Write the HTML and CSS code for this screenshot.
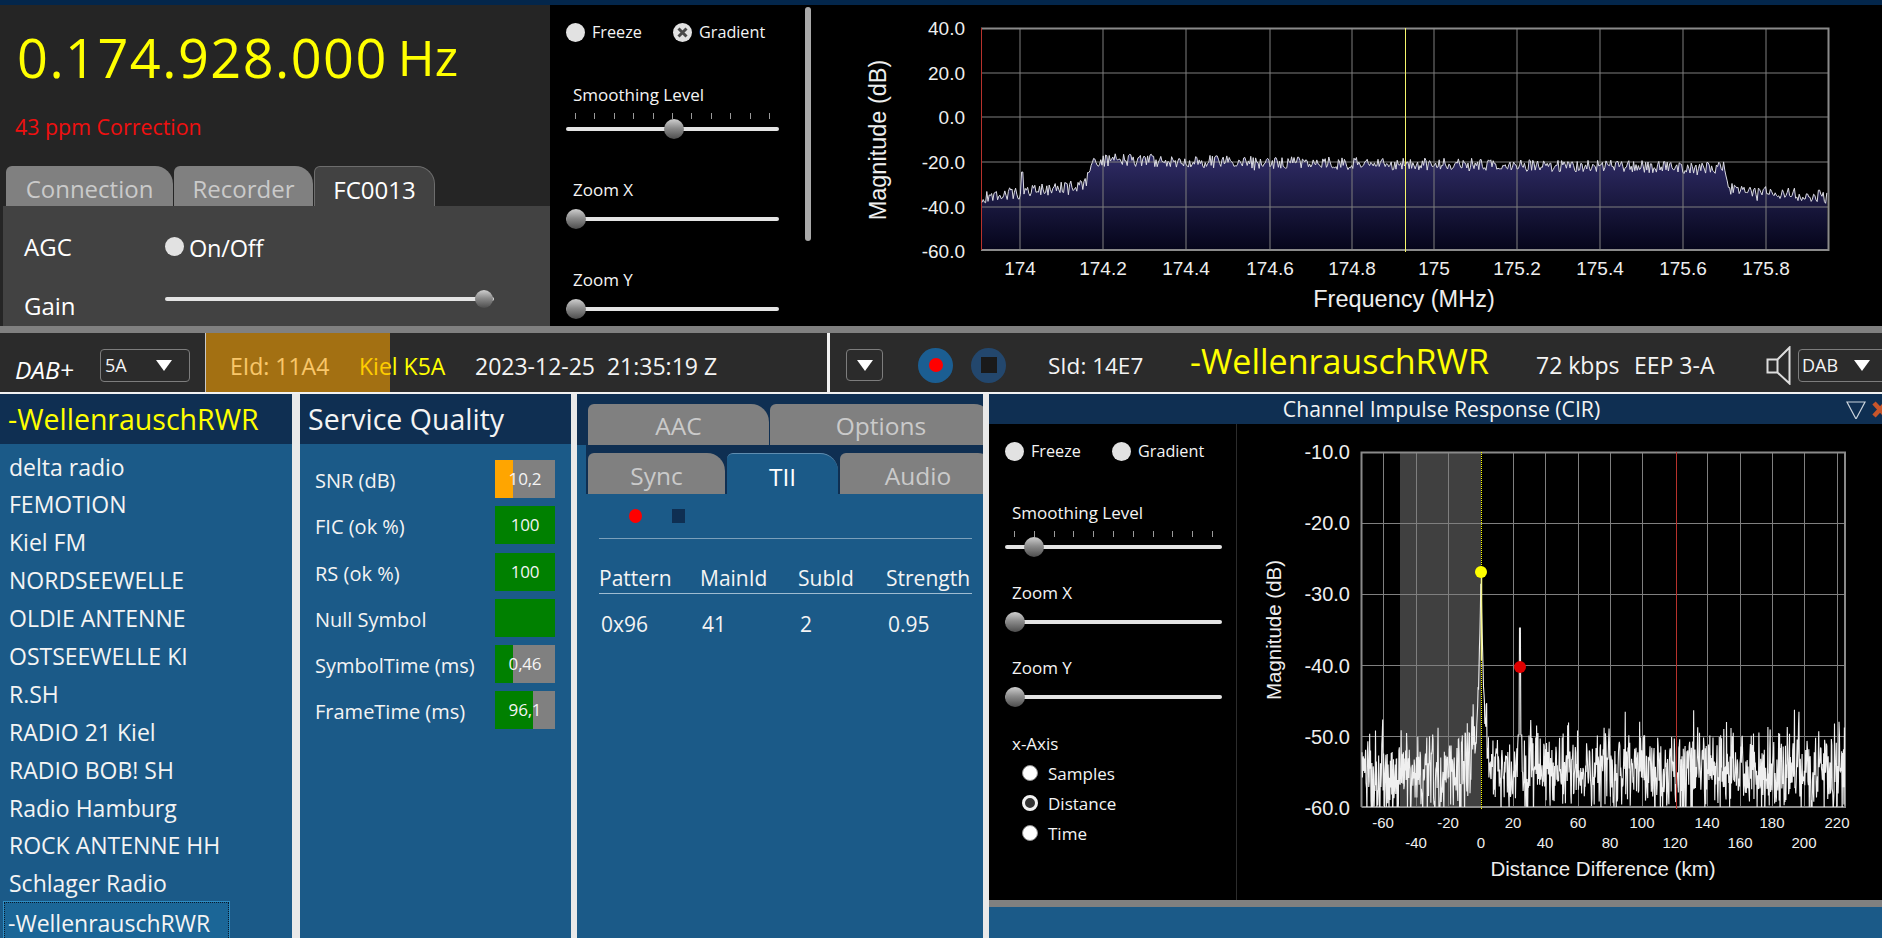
FILE: index.html
```html
<!DOCTYPE html>
<html lang="en">
<head>
    <meta charset="UTF-8">
    <title>welle.io</title>
    <link rel="stylesheet" href="styles.css">
</head>
<body>
<div class="app">
    <div class="top-strip"></div>

    <div class="top-row">
        <section class="freq-panel">
            <div class="freq-readout"><span class="freq-value">0.174.928.000</span><span class="freq-unit">Hz</span></div>
            <div class="ppm">43 ppm Correction</div>
            <div class="tab-bar">
                <div class="tab tab-connection">Connection</div>
                <div class="tab tab-recorder">Recorder</div>
                <div class="tab tab-device active">FC0013</div>
            </div>
            <div class="device-page">
                <div class="device-label">AGC</div>
                <div class="agc-toggle"><span class="radio agc-radio"></span><span>On/Off</span></div>
                <div class="device-label">Gain</div>
                <div class="slider gain-slider"><span class="track"></span><span class="thumb gain-thumb" style="left:94.2%"></span></div>
            </div>
        </section>

        <section class="controls spec-controls">
            <div class="controls-scroll">
                <div class="toggle-row">
                    <div class="toggle"><span class="radio"></span><span>Freeze</span></div>
                    <div class="toggle">
                        <span class="radio"><svg viewBox="0 0 19 19"><path d="M5.5 5.5l8 8M13.5 5.5l-8 8" stroke="#4a4a4a" stroke-width="3" fill="none"/></svg></span>
                        <span>Gradient</span>
                    </div>
                </div>
                <div class="control-group first">
                    <div class="control-label">Smoothing Level</div>
                    <div class="ticks"><i></i><i></i><i></i><i></i><i></i><i></i><i></i><i></i><i></i><i></i><i></i></div>
                    <div class="slider"><span class="track"></span><span class="thumb" style="left:46%"></span></div>
                </div>
                <div class="control-group">
                    <div class="control-label">Zoom X</div>
                    <div class="slider"><span class="track"></span><span class="thumb" style="left:0"></span></div>
                </div>
                <div class="control-group">
                    <div class="control-label">Zoom Y</div>
                    <div class="slider"><span class="track"></span><span class="thumb" style="left:0"></span></div>
                </div>
            </div>
            <div class="scrollbar"></div>
        </section>

        <svg class="spectrum" viewBox="830 5 1052 321" width="1052" height="321">
            <defs>
                <linearGradient id="specFill" gradientUnits="userSpaceOnUse" x1="0" y1="160" x2="0" y2="250">
                    <stop offset="0" stop-color="#2d2a62"/>
                    <stop offset="1" stop-color="#05051a"/>
                </linearGradient>
            </defs>
            <path id="specArea" fill="url(#specFill)"/>
            <path class="grid" d="M981 73H1829M981 117H1829M981 162H1829M981 207H1829M1020 28V250M1103 28V250M1186 28V250M1270 28V250M1352 28V250M1434 28V250M1517 28V250M1600 28V250M1683 28V250M1766 28V250"/>
            <path class="frame" d="M981 28.5H1828.5V250H981"/>
            <path class="marker-red" d="M981.5 28V250"/>
            <path id="specTrace" class="trace-thin"/>
            <path class="marker-yellow" d="M1405.5 28V252"/>
            <g class="tick y-tick">
                <text x="965" y="35">40.0</text>
                <text x="965" y="80">20.0</text>
                <text x="965" y="124">0.0</text>
                <text x="965" y="169">-20.0</text>
                <text x="965" y="214">-40.0</text>
                <text x="965" y="258">-60.0</text>
            </g>
            <g class="tick x-tick">
                <text x="1020" y="275">174</text>
                <text x="1103" y="275">174.2</text>
                <text x="1186" y="275">174.4</text>
                <text x="1270" y="275">174.6</text>
                <text x="1352" y="275">174.8</text>
                <text x="1434" y="275">175</text>
                <text x="1517" y="275">175.2</text>
                <text x="1600" y="275">175.4</text>
                <text x="1683" y="275">175.6</text>
                <text x="1766" y="275">175.8</text>
            </g>
            <text class="axis-title spec-axis" x="1404" y="307">Frequency (MHz)</text>
            <text class="axis-title spec-axis" transform="rotate(-90 886 140)" x="886" y="140">Magnitude (dB)</text>
        </svg>
    </div>

    <div class="separator"></div>

    <header class="info-bar">
        <div class="mode">DAB+</div>
        <div class="combo channel-combo"><span>5A</span><i class="arrow"></i></div>
        <div class="ensemble">
            <span class="ensemble-id">EId: 11A4</span>
            <span class="ensemble-name">Kiel K5A</span>
            <span class="ensemble-time">2023-12-25&nbsp;&nbsp;21:35:19 Z</span>
            <div class="ensemble-fill" style="width:184px"></div>
        </div>
        <div class="service">
            <div class="combo small-combo"><i class="arrow"></i></div>
            <div class="round-btn record"><i></i></div>
            <div class="round-btn stop"><i></i></div>
            <span class="service-id">SId: 14E7</span>
            <span class="service-name">-WellenrauschRWR</span>
            <span class="service-rate">72 kbps</span>
            <span class="service-eep">EEP 3-A</span>
            <svg class="speaker" viewBox="0 0 25 39" width="25" height="39">
                <path d="M1.5 13.5H11.5V26.5H1.5ZM11.5 13.5L23.5 1.5V37.5L11.5 26.5" fill="none" stroke="#ddd" stroke-width="2"/>
            </svg>
            <div class="combo audio-combo"><span>DAB</span><i class="arrow"></i></div>
        </div>
    </header>

    <main class="main">
        <section class="stations">
            <h2 class="pane-head current">-WellenrauschRWR</h2>
            <ul class="station-list">
                <li>delta radio</li>
                <li>FEMOTION</li>
                <li>Kiel FM</li>
                <li>NORDSEEWELLE</li>
                <li>OLDIE ANTENNE</li>
                <li>OSTSEEWELLE KI</li>
                <li>R.SH</li>
                <li>RADIO 21 Kiel</li>
                <li>RADIO BOB! SH</li>
                <li>Radio Hamburg</li>
                <li>ROCK ANTENNE HH</li>
                <li>Schlager Radio</li>
                <li class="selected">-WellenrauschRWR</li>
            </ul>
        </section>

        <section class="quality">
            <h2 class="pane-head">Service Quality</h2>
            <div class="quality-rows">
                <div class="quality-row"><span class="quality-label">SNR (dB)</span><div class="meter"><i class="warn" style="width:18px"></i><b>10,2</b></div></div>
                <div class="quality-row"><span class="quality-label">FIC (ok %)</span><div class="meter"><i style="width:100%"></i><b>100</b></div></div>
                <div class="quality-row"><span class="quality-label">RS (ok %)</span><div class="meter"><i style="width:100%"></i><b>100</b></div></div>
                <div class="quality-row"><span class="quality-label">Null Symbol</span><div class="meter"><i style="width:100%"></i></div></div>
                <div class="quality-row"><span class="quality-label">SymbolTime (ms)</span><div class="meter"><i style="width:18px"></i><b>0,46</b></div></div>
                <div class="quality-row"><span class="quality-label">FrameTime (ms)</span><div class="meter"><i style="width:38px"></i><b>96,1</b></div></div>
            </div>
        </section>

        <section class="details">
            <div class="detail-tabs row-one">
                <div class="tab">AAC</div>
                <div class="tab">Options</div>
            </div>
            <div class="detail-tabs row-two">
                <div class="tab">Sync</div>
                <div class="tab active">TII</div>
                <div class="tab">Audio</div>
            </div>
            <div class="tii-page">
                <div class="tii-buttons"><span class="tii-dot"></span><span class="tii-square"></span></div>
                <div class="tii-grid tii-head"><span>Pattern</span><span>MainId</span><span>SubId</span><span>Strength</span></div>
                <div class="tii-grid tii-row"><span>0x96</span><span>41</span><span>2</span><span>0.95</span></div>
            </div>
        </section>

        <section class="cir">
            <div class="cir-head">
                <span class="cir-title">Channel Impulse Response (CIR)</span>
                <svg class="cir-icons" viewBox="0 0 42 20" width="42" height="20">
                    <path d="M2 3H20L11 20Z" fill="none" stroke="#c9d3dc" stroke-width="1.2"/>
                    <path d="M29 4L41 17M41 4L29 17" stroke="#c8552a" stroke-width="4.5" fill="none"/>
                </svg>
            </div>
            <div class="cir-body">
                <div class="controls cir-controls">
                    <div class="toggle-row">
                        <div class="toggle"><span class="radio"></span><span>Freeze</span></div>
                        <div class="toggle"><span class="radio"></span><span>Gradient</span></div>
                    </div>
                    <div class="control-group first">
                        <div class="control-label">Smoothing Level</div>
                        <div class="ticks"><i></i><i></i><i></i><i></i><i></i><i></i><i></i><i></i><i></i><i></i><i></i></div>
                        <div class="slider"><span class="track"></span><span class="thumb" style="left:8.8%"></span></div>
                    </div>
                    <div class="control-group">
                        <div class="control-label">Zoom X</div>
                        <div class="slider"><span class="track"></span><span class="thumb" style="left:0"></span></div>
                    </div>
                    <div class="control-group">
                        <div class="control-label">Zoom Y</div>
                        <div class="slider"><span class="track"></span><span class="thumb" style="left:0"></span></div>
                    </div>
                    <div class="axis-choice">
                        <div class="control-label">x-Axis</div>
                        <div class="option"><span class="option-dot"></span><span>Samples</span></div>
                        <div class="option checked"><span class="option-dot"></span><span>Distance</span></div>
                        <div class="option"><span class="option-dot"></span><span>Time</span></div>
                    </div>
                </div>
                <svg class="cir-chart" viewBox="1237 424 645 476" width="645" height="476">
                    <defs>
                        <clipPath id="cirClip"><rect x="1361" y="452" width="484" height="355"/></clipPath>
                    </defs>
                    <rect x="1400" y="452" width="81" height="355" fill="#404040"/>
                    <path class="grid" d="M1361 523.5H1845M1361 594.5H1845M1361 665.5H1845M1361 736.5H1845M1383.5 452V807M1416.5 452V807M1448.5 452V807M1513.5 452V807M1545.5 452V807M1578.5 452V807M1610.5 452V807M1642.5 452V807M1707.5 452V807M1740.5 452V807M1772.5 452V807M1804.5 452V807M1837.5 452V807"/>
                    <path class="frame" d="M1361.5 807V452.5H1845V807H1361.5"/>
                    <path id="cirTrace" class="trace-noise" clip-path="url(#cirClip)"/>
                    <path class="marker-dotted" d="M1481.5 452V809"/>
                    <path class="marker-solid" d="M1481.5 572V660"/>
                    <path class="marker-red" d="M1676.5 452V809"/>
                    <circle cx="1481" cy="572" r="6" fill="#ffff00"/>
                    <circle cx="1520" cy="667" r="6" fill="#e00000"/>
                    <g class="tick cir-y-tick">
                        <text x="1350" y="459">-10.0</text>
                        <text x="1350" y="530">-20.0</text>
                        <text x="1350" y="601">-30.0</text>
                        <text x="1350" y="673">-40.0</text>
                        <text x="1350" y="744">-50.0</text>
                        <text x="1350" y="815">-60.0</text>
                    </g>
                    <g class="tick cir-x-tick">
                        <text x="1383" y="828">-60</text>
                        <text x="1448" y="828">-20</text>
                        <text x="1513" y="828">20</text>
                        <text x="1578" y="828">60</text>
                        <text x="1642" y="828">100</text>
                        <text x="1707" y="828">140</text>
                        <text x="1772" y="828">180</text>
                        <text x="1837" y="828">220</text>
                        <text x="1416" y="848">-40</text>
                        <text x="1481" y="848">0</text>
                        <text x="1545" y="848">40</text>
                        <text x="1610" y="848">80</text>
                        <text x="1675" y="848">120</text>
                        <text x="1740" y="848">160</text>
                        <text x="1804" y="848">200</text>
                    </g>
                    <text class="axis-title cir-axis" x="1603" y="876">Distance Difference (km)</text>
                    <text class="axis-title cir-axis" transform="rotate(-90 1281 630)" x="1281" y="630">Magnitude (dB)</text>
                </svg>
            </div>
            <div class="cir-split"></div>
            <div class="cir-foot"></div>
        </section>
    </main>
</div>
<script src="charts.js"></script>
</body>
</html>
```

FILE: styles.css
```css
:root {
    --navy: #0f2f52;
    --blue: #1b5a88;
    --gap: #e9e9e9;
    --tab: #808080;
    --tab-text: #cacaca;
    --text: #f4f4f4;
}
* {
    box-sizing: border-box;
}
html, body {
    margin: 0;
    height: 100%;
    overflow: hidden;
    background-color: #000;
}
body {
    font-family: "Open Sans", "Noto Sans", sans-serif;
    color: var(--text);
}
.app {
    display: flex;
    flex-direction: column;
    width: 1882px;
    height: 938px;
    overflow: hidden;
}
.top-strip {
    height: 5px;
    background-color: #03264b;
}
.top-row {
    display: flex;
    height: 321px;
    background-color: #000;
}
.separator {
    height: 7px;
    background-color: #808080;
}

/* frequency panel */
.freq-panel {
    display: flex;
    flex-direction: column;
    width: 550px;
    background-color: #252525;
    color: #ffff00;
}
.freq-readout {
    display: flex;
    height: 104px;
    line-height: 104px;
    padding-left: 17px;
    font-size: 54px;
}
.freq-value {
    letter-spacing: 1.5px;
}
.freq-unit {
    margin-left: 10px;
    font-size: 50px;
}
.ppm {
    height: 36px;
    line-height: 36px;
    padding-left: 15px;
    font-size: 21.4px;
    color: #f01010;
}
.tab-bar {
    display: flex;
    gap: 1px;
    margin-top: 21px;
    padding-left: 6px;
}
.tab {
    height: 40px;
    line-height: 40px;
    padding-top: 3px;
    text-align: center;
    font-size: 24px;
    color: var(--tab-text);
    background-color: var(--tab);
    border-radius: 6px 18px 0 0;
}
.tab.active {
    color: #fff;
}
.tab-connection {
    width: 167px;
}
.tab-recorder {
    width: 139px;
}
.tab-device {
    width: 121px;
    background-color: #424242;
    border: 1px solid #6d6d6d;
    border-bottom: 0;
}
.device-page {
    flex: 1;
    display: grid;
    grid-template-columns: 141px 329px;
    grid-auto-rows: 40px;
    row-gap: 19px;
    align-items: center;
    margin-left: 3px;
    padding: 20px 0 0 21px;
    background-color: #424242;
}
.device-label {
    font-size: 24px;
    color: #fff;
}
.agc-toggle {
    display: flex;
    align-items: center;
    gap: 5px;
    font-size: 23.5px;
    letter-spacing: -0.2px;
    color: #fff;
}
.agc-toggle span:last-child {
    padding-top: 4px;
}
.agc-radio {
    width: 20px;
    height: 20px;
}

/* shared controls */
.controls {
    font-size: 16.2px;
    background-color: #000;
}
.spec-controls {
    display: flex;
    flex: none;
    width: 280px;
    height: 321px;
    overflow: hidden;
    padding-left: 16px;
}
.controls-scroll {
    width: 239px;
    padding-top: 15px;
    --track: 213px;
}
.scrollbar {
    width: 6px;
    height: 234px;
    margin-top: 2px;
    border-radius: 3px;
    background-color: #a9a9a9;
}
.toggle-row {
    display: flex;
    height: 24px;
}
.toggle {
    display: flex;
    align-items: center;
    gap: 7px;
    width: 107px;
    line-height: 24px;
    white-space: nowrap;
}
.radio {
    flex: none;
    display: block;
    width: 19px;
    height: 19px;
    border-radius: 50%;
    background-color: #e2e2e2;
}
.radio svg {
    display: block;
}
.control-group {
    margin-top: 37px;
}
.control-group.first {
    margin-top: 39px;
}
.control-label {
    height: 24px;
    line-height: 24px;
    margin-left: 7px;
    font-size: 17px;
    white-space: nowrap;
}
.ticks {
    display: flex;
    justify-content: space-between;
    width: var(--track);
    height: 6px;
    margin-top: 6px;
    padding: 0 9px;
}
.ticks i {
    width: 1px;
    background-color: #9a9a9a;
}
.slider {
    position: relative;
    width: var(--track);
    height: 24px;
    margin-top: 5px;
}
.ticks + .slider {
    margin-top: -2px;
}
.track {
    position: absolute;
    left: 0;
    right: 0;
    top: 10px;
    height: 4px;
    border-radius: 2px;
    background-color: #e4e4e4;
}
.thumb {
    position: absolute;
    top: 2px;
    width: 20px;
    height: 20px;
    border-radius: 50%;
    background: linear-gradient(#cfcfcf, #8c8c8c 45%, #4d4d4d);
}
.gain-slider {
    --track: 329px;
    margin-top: 0;
    top: -6px;
}
.gain-thumb {
    width: 18px;
    height: 18px;
    top: 3px;
}
.cir-controls {
    width: 249px;
    padding: 15px 0 0 16px;
    border-right: 1px solid #2c2c2c;
    --track: 217px;
}
.cir-controls .toggle-row + .control-group {
    margin-top: 38px;
}
.cir-controls .control-group {
    margin-top: 22px;
}
.axis-choice {
    margin-top: 23px;
}
.option {
    display: flex;
    align-items: center;
    gap: 10px;
    height: 30px;
    margin-left: 17px;
    font-size: 17px;
}
.axis-choice .control-label + .option {
    margin-top: 2px;
}
.option-dot {
    width: 16px;
    height: 16px;
    border-radius: 50%;
    background-color: #fff;
    border: 1px solid #8f8f8f;
}
.option.checked .option-dot {
    background-color: #333;
    border: 3px solid #f2f2f2;
}

/* spectrum and cir charts */
.spectrum, .cir-chart {
    display: block;
    flex: none;
}
.grid {
    fill: none;
    stroke: #7f7f7f;
    stroke-width: 1;
}
.frame {
    fill: none;
    stroke: #8a8a8a;
    stroke-width: 2;
}
.marker-red {
    fill: none;
    stroke: #b8322c;
    stroke-width: 1;
}
.marker-yellow {
    fill: none;
    stroke: #f5f56a;
    stroke-width: 1;
}
.marker-dotted {
    fill: none;
    stroke: #ffff00;
    stroke-width: 1;
    stroke-dasharray: 1 1;
}
.marker-solid {
    fill: none;
    stroke: #f6f68a;
    stroke-width: 1.5;
}
.trace-thin {
    fill: none;
    stroke: #dcdce4;
    stroke-width: 1;
}
.trace-noise {
    fill: none;
    stroke: #efefef;
    stroke-width: 1.1;
}
.tick text, .axis-title {
    font-family: "Liberation Sans", Arial, sans-serif;
    fill: #eee;
}
.y-tick text, .cir-y-tick text {
    text-anchor: end;
}
.x-tick text, .cir-x-tick text, .axis-title {
    text-anchor: middle;
}
.y-tick text, .x-tick text {
    font-size: 19px;
}
.cir-y-tick text {
    font-size: 20px;
}
.cir-x-tick text {
    font-size: 15px;
}
.spec-axis {
    font-size: 23.5px;
}
.cir-axis {
    font-size: 20.5px;
}

/* info bar */
.info-bar {
    display: flex;
    align-items: center;
    flex: none;
    height: 61px;
    padding-left: 15px;
    background-color: #2b2b2b;
    border-bottom: 2px solid #f2f2f2;
}
.mode {
    flex: none;
    width: 85px;
    margin-top: 13px;
    font-size: 24.5px;
    font-style: italic;
    color: #fff;
}
.combo {
    position: relative;
    display: flex;
    flex: none;
    align-items: center;
    height: 33px;
    border: 1px solid #7d7d7d;
    border-radius: 4px;
    font-size: 18px;
}
.arrow {
    width: 0;
    height: 0;
    border-left: 8px solid transparent;
    border-right: 8px solid transparent;
    border-top: 11px solid #fff;
}
.channel-combo {
    justify-content: space-between;
    width: 90px;
    margin: 5px 15px 0 0;
    padding: 0 17px 0 4px;
}
.ensemble {
    position: relative;
    display: flex;
    flex: none;
    align-self: stretch;
    align-items: center;
    width: 625px;
    padding-top: 7px;
    border-left: 1px solid #c9c9c9;
    border-right: 3px solid #f2f2f2;
    font-size: 23px;
    white-space: nowrap;
}
.ensemble-id {
    margin-left: 24px;
    width: 129px;
}
.ensemble-name {
    width: 116px;
    color: #ffff00;
}
.ensemble-fill {
    position: absolute;
    left: 0;
    top: 0;
    bottom: 0;
    background-color: rgba(255, 165, 0, 0.57);
}
.service {
    display: flex;
    flex: none;
    align-items: center;
    width: 1052px;
    padding: 5px 0 0 16px;
    font-size: 22.5px;
    white-space: nowrap;
}
.small-combo {
    justify-content: center;
    width: 37px;
    height: 32px;
}
.round-btn {
    display: flex;
    align-items: center;
    justify-content: center;
    width: 35px;
    height: 35px;
    border-radius: 50%;
    flex: none;
}
.record {
    margin-left: 35px;
    background-color: #1b5e92;
}
.record i {
    width: 14px;
    height: 14px;
    border-radius: 50%;
    background-color: #ff0000;
}
.stop {
    margin-left: 18px;
    background-color: #23476d;
}
.stop i {
    width: 16px;
    height: 16px;
    background-color: #1a1a1a;
}
.service-id {
    flex: none;
    margin-left: 42px;
    width: 142px;
}
.service-name {
    flex: none;
    width: 346px;
    margin-bottom: 8px;
    font-size: 34px;
    color: #ffff00;
}
.service-rate {
    flex: none;
    width: 98px;
    font-size: 23px;
}
.service-eep {
    flex: none;
    width: 132px;
    font-size: 23px;
}
.speaker {
    flex: none;
}
.audio-combo {
    width: 100px;
    margin-left: 7px;
    padding: 0 0 0 3px;
    gap: 16px;
}

/* lower panes */
.main {
    display: flex;
    flex: 1;
    min-height: 0;
    background-color: var(--gap);
}
.pane-head {
    margin: 0;
    height: 50px;
    line-height: 50px;
    font-size: 28.5px;
    font-weight: 400;
    white-space: nowrap;
    background-color: var(--navy);
}
.stations {
    width: 292px;
    background-color: var(--blue);
    overflow: hidden;
}
.current {
    padding-left: 8px;
    color: #ffff00;
}
.station-list {
    list-style: none;
    margin: 0;
    padding: 4.5px 0 0;
    font-size: 23px;
}
.station-list li {
    height: 37.9px;
    line-height: 37.9px;
    padding-left: 9px;
    white-space: nowrap;
}
.station-list .selected {
    width: 227px;
    height: 42px;
    line-height: 42px;
    margin: -2px 0 0 3px;
    padding-left: 4px;
    background-color: #1b6697;
    border: 1px solid #2f8ec4;
    outline: 1px dotted #081a2a;
    outline-offset: -2px;
}
.quality {
    width: 271px;
    margin-left: 8px;
    background-color: var(--blue);
}
.quality .pane-head {
    padding-left: 8px;
}
.quality-rows {
    padding: 16px 0 0 15px;
}
.quality-row {
    display: flex;
    align-items: center;
    height: 38px;
    margin-bottom: 8.3px;
}
.quality-label {
    width: 180px;
    padding-top: 3px;
    font-size: 20px;
    white-space: nowrap;
}
.meter {
    position: relative;
    width: 60px;
    height: 38px;
    line-height: 38px;
    text-align: center;
    background-color: #808080;
    overflow: hidden;
}
.meter i {
    position: absolute;
    left: 0;
    top: 0;
    bottom: 0;
    background-color: #008000;
}
.meter i.warn {
    background-color: #ffa500;
}
.meter b {
    position: relative;
    font-weight: 400;
    font-size: 17px;
    letter-spacing: -0.2px;
}
.details {
    display: flex;
    flex-direction: column;
    width: 406px;
    margin-left: 6px;
    background-color: var(--blue);
    overflow: hidden;
}
.detail-tabs {
    display: grid;
    background-color: var(--navy);
}
.detail-tabs .tab {
    height: 41px;
    line-height: 41px;
    font-size: 24.5px;
}
.row-one {
    grid-template-columns: 181px 222px;
    column-gap: 1px;
    padding: 10px 0 0 11px;
}
.row-one .tab {
    padding-top: 1px;
}
.row-two {
    grid-template-columns: 137px 111px 156px;
    column-gap: 2px;
    margin-left: 9px;
    padding: 8px 0 0 2px;
}
.row-two .tab {
    padding-top: 2px;
}
.row-two .tab.active {
    background-color: var(--blue);
    border-top: 1px solid #5f8db0;
}
.tii-page {
    flex: 1;
    padding: 0 11px 0 22px;
    font-size: 21px;
}
.tii-buttons {
    display: flex;
    align-items: center;
    gap: 30px;
    height: 45px;
    padding-left: 30px;
    border-bottom: 1px solid #7b9fba;
}
.tii-dot {
    width: 13px;
    height: 14px;
    border-radius: 50%;
    background-color: #ff0000;
}
.tii-square {
    width: 13px;
    height: 14px;
    background-color: var(--navy);
}
.tii-grid {
    display: grid;
    grid-template-columns: 101px 98px 88px 85px;
    height: 30px;
    line-height: 30px;
    white-space: nowrap;
}
.tii-head {
    margin-top: 24px;
    height: 31px;
    border-bottom: 1px solid #9fbcd1;
}
.tii-row {
    margin-top: 15px;
    padding-left: 2px;
}
.cir {
    display: flex;
    flex-direction: column;
    flex: 1;
    min-width: 0;
    margin-left: 6px;
    background-color: var(--blue);
}
.cir-head {
    position: relative;
    flex: none;
    height: 30px;
    line-height: 30px;
    padding-left: 12px;
    text-align: center;
    font-size: 21.2px;
    white-space: nowrap;
    background-color: var(--navy);
    overflow: hidden;
}
.cir-icons {
    position: absolute;
    right: -5px;
    top: 5px;
}
.cir-body {
    display: flex;
    flex: none;
    height: 476px;
    background-color: #000;
}
.cir-split {
    flex: none;
    height: 7px;
    background-color: #808080;
}
.cir-foot {
    flex: 1;
}
```

FILE: charts.js
```js
// noise traces for the two plots, seeded so every load looks the same
function seeded(seed) {
    return function () {
        seed = (seed + 0x6D2B79F5) | 0;
        var t = Math.imul(seed ^ (seed >>> 15), 1 | seed);
        t = (t + Math.imul(t ^ (t >>> 7), 61 | t)) ^ t;
        return ((t ^ (t >>> 14)) >>> 0) / 4294967296;
    };
}

function spectrumLevel(x) {
    if (x < 1086) return 198 - (x - 981) * 0.13;
    if (x < 1092) return 184 - (x - 1086) * 4;
    if (x < 1724) return 160 + (x - 1092) * 0.012;
    if (x < 1728) return 168 + (x - 1724) * 5;
    return 189 + (x - 1728) * 0.08;
}

function drawSpectrum() {
    var rand = seeded(41);
    var points = [];
    for (var x = 982; x <= 1828; x += 1.2) {
        var n = (rand() - 0.5) * 13 + (rand() < 0.05 ? (rand() - 0.2) * 10 : 0);
        var y = spectrumLevel(x) + n;
        if (Math.abs(x - 1022) < 1) y = 172;
        points.push(x.toFixed(1) + " " + y.toFixed(1));
    }
    var line = "M" + points.join("L");
    document.getElementById("specTrace").setAttribute("d", line);
    document.getElementById("specArea").setAttribute("d", line + "L1828 250L982 250Z");
}

function drawCir() {
    var rand = seeded(7);
    var points = [];
    for (var x = 1362; x <= 1845; x += 0.45) {
        var gauss = (rand() + rand() + rand() - 1.5) * 44;
        var dx = Math.abs(x - 1481);
        var peak = 150 * Math.exp(-dx / 2.4) + 52 * Math.exp(-dx / 7);
        var y = 772 - peak + gauss * (1 - Math.min(peak / 120, 0.85));
        var other = Math.abs(x - 1520);
        if (other < 0.5) y = 628;
        else if (other < 2) y = 735;
        points.push(x.toFixed(2) + " " + y.toFixed(1));
    }
    document.getElementById("cirTrace").setAttribute("d", "M" + points.join("L"));
}

drawSpectrum();
drawCir();
```
